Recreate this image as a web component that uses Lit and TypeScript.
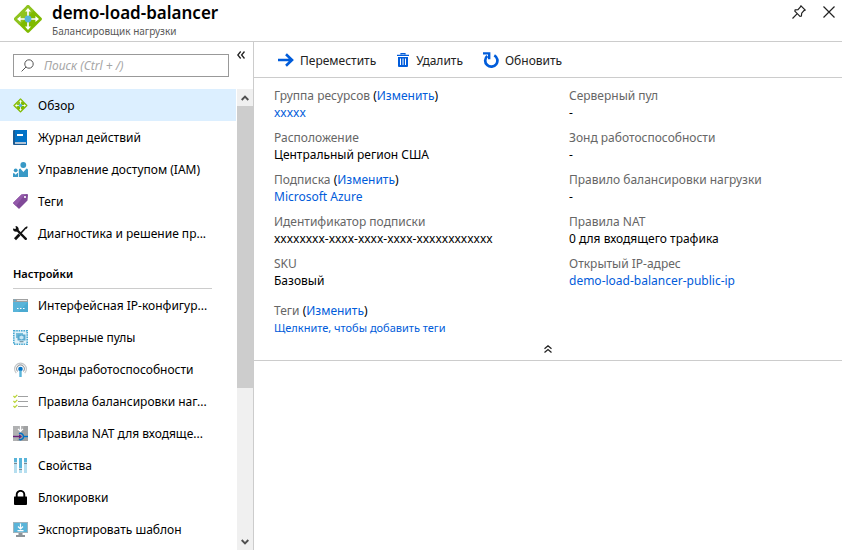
import { LitElement, html, svg, css, nothing, TemplateResult } from "lit";
import { customElement, property } from "lit/decorators.js";
import { classMap } from "lit/directives/class-map.js";

const balancer = svg`
  <path d="M14 1.400 Q15 .6 16 1.400 L28.600 14 Q29.400 15 28.600 16 L16 28.600 Q15 29.400 14 28.600 L1.400 16 Q.6 15 1.400 14Z" fill="#7fba00"/>
  <path d="M14 1.400 Q15 .6 16 1.400 L21 6.400 L6.400 21 L1.400 16 Q.6 15 1.400 14Z" fill="#8fc31f"/>
  <path d="M15 6V24M6 15H24" stroke="#fff" stroke-width="1.700"/>
  <path d="M15 4 L18 7.600H12ZM15 26 L12 22.400H18ZM4 15 L7.600 12V18ZM26 15 L22.400 18V12Z" fill="#fff"/>
  <circle cx="15" cy="15" r="3.400" fill="#59b4d9"/>`;

interface Icon { box: string; art: unknown }

const icons: Record<string, Icon> = {
  balancer: { box: "0 0 30 30", art: balancer },
  log: { box: "0 0 15 15", art: svg`
    <path d="M1 0H13V12H1Z" fill="#0072c6"/><path d="M2 12.500H13V13.500H2Z" fill="#dfe3e8"/>
    <path d="M0 1Q0 0 1 0H2V12.500H13V13.500H2V14H14V15H1Q0 15 0 14Z" fill="#1d5b92"/>
    <path d="M2 12.500H13V13.500H2Z" fill="#dfe3e8"/><path d="M13 0H14V15H13Z" fill="#0072c6"/>
    <path d="M4 4H10V6H4Z" fill="#fff"/>` },
  people: { box: "0 0 15 15", art: svg`
    <circle cx="10.300" cy="3" r="2.900" fill="#3999c6"/>
    <path d="M5.800 15V8Q5.800 6.500 7.300 6.500L10.400 10L13.500 6.500Q15 6.500 15 8V15Z" fill="#3999c6"/>
    <circle cx="2.700" cy="8.300" r="1.900" fill="#3999c6"/>
    <path d="M0 15V12Q0 11 1 11L2.700 12.800L4.400 11H5V15Z" fill="#3999c6"/>` },
  tag: { box: "0 0 15 15", art: svg`
    <path d="M8.500 .5L14 0Q15 0 15 1L14.500 6.500L6.500 14.500Q6 15 5.500 14.500L.4 9.500Q0 9 .4 8.500Z" fill="#804998"/>
    <path d="M8.500 .5L12 .2L3 12L.4 9.500Q0 9 .4 8.500Z" fill="#9359aa"/>
    <circle cx="12" cy="3" r="1.100" fill="#fff"/>` },
  tools: { box: "0 0 15 15", art: svg`
    <path d="M3.500 3.500L12.800 12.800" stroke="#111" stroke-width="2.400" stroke-linecap="round"/>
    <path d="M2.500 0L3 2.500L2.500 3L0 2.500Q0 6 3.500 5.800L5.800 3.500Q5.500 0 2.500 0Z" fill="#111"/>
    <path d="M12.800 1.800L8 7" stroke="#111" stroke-width="1.600"/>
    <path d="M14 .3L14.700 1L13.500 3L12 1.500Z" fill="#111"/>
    <path d="M6.500 8.500L2 13.300" stroke="#111" stroke-width="2.800"/>` },
  frontend: { box: "0 0 15 15", art: svg`
    <path d="M0 1H15V14H0Z" fill="#59b4d9"/><path d="M0 1H15V4H0Z" fill="#a0a1a2"/>
    <path d="M15 4V14H5Z" fill="#4baad1"/><circle cx="1.700" cy="2.500" r="1.100" fill="#59b4d9"/>
    <path d="M4 2H14V3H4Z" fill="#e4e4e4"/><path d="M4 10H5.500V11H4ZM7 10H8.500V11H7ZM10 10H11.500V11H10Z" fill="#fff"/>` },
  pools: { box: "0 0 15 15", art: svg`
    <rect x="1" y="1" width="13" height="13" fill="#e3f3fa"/>
    <rect x=".8" y=".8" width="13.400" height="13.400" fill="none" stroke="#48a8d1" stroke-width="1.600" stroke-dasharray="1.600 .8"/>
    <path d="M3 3H10V8H3Z" fill="#76bdda"/><path d="M4.500 4.500H12.500V10.500H4.500Z" fill="#59a9cf"/>
    <path d="M8.500 5.500L10.500 6.500V8.500L8.500 9.500L6.500 8.500V6.500Z" fill="#c7e6f4"/><path d="M6.500 11H10.500V12.300H6.500Z" fill="#7a9cab"/>` },
  probe: { box: "0 0 15 15", art: svg`
    <g fill="none"><path d="M3.300 11.200A5.900 5.900 0 1 1 11.700 11.200" stroke="#c2c5c7" stroke-width="1.200"/>
    <path d="M4.700 9.500A3.800 3.800 0 1 1 10.300 9.500" stroke="#9ca1a5" stroke-width="1.100"/></g>
    <circle cx="7.500" cy="7" r="2.300" fill="#0072c6"/><path d="M6.300 8.500H8.700V15H6.300Z" fill="#59b4d9"/>` },
  rules: { box: "0 0 15 15", art: svg`
    <path d="M5 2.500H15M5 7.500H15M5 12.500H15" stroke="#a0a1a2"/>
    <path d="M.4 2L1.800 3.300L4.300 .8M.4 7L1.800 8.300L4.300 5.800M.4 12L1.800 13.300L4.300 10.800" fill="none" stroke="#b8d432" stroke-width="1.200"/>` },
  nat: { box: "0 0 15 15", art: svg`
    <path d="M0 0H15V15H0Z" fill="#a0a1a2"/><path d="M0 0H11L4 15H0Z" fill="#b0b1b2"/>
    <path d="M7.500 0V5M5 2.800L7.500 5.300L10 2.800" fill="none" stroke="#fff" stroke-width="1.200"/>
    <path d="M0 10.500H8" stroke="#68217a" stroke-width="1.400"/><path d="M11 10.500H15" stroke="#0072c6" stroke-width="1.400"/>
    <path d="M6 7.600A3.200 3.200 0 1 1 6 13.400" fill="none" stroke="#0072c6" stroke-width="1.400"/>
    <path d="M6 8.300L9 10.500L6 12.700Z" fill="#68217a"/>` },
  props: { box: "0 0 15 15", art: svg`
    <path d="M1 0H4V15H1ZM6 0H9V15H6ZM11 0H14V15H11Z" fill="#b5deef"/>
    <path d="M1 0H4V4H1ZM6 0H9V10H6ZM11 0H14V4H11Z" fill="#59b4d9"/>
    <path d="M1 5H4V6H1ZM6 11H9V12H6ZM11 5H14V6H11Z" fill="#7b8a93"/>` },
  lock: { box: "0 0 15 15", art: svg`
    <path d="M3.700 7V4.500A3.800 3.600 0 0 1 11.300 4.500V7" fill="none" stroke="#000" stroke-width="1.900"/>
    <path d="M1.500 6.500H13.500Q14 6.500 14 7.500V14Q14 15 13 15H2Q1 15 1 14V7.500Q1 6.500 1.500 6.500Z"/>` },
  exporter: { box: "0 0 15 15", art: svg`
    <path d="M0 0H15V11H0Z" fill="#a0b4bd"/><path d="M1 1H14V10H1Z" fill="#59b4d9"/>
    <path d="M7.500 1.500V7M5 4.500L7.500 7L10 4.500M4.500 8.700H10.500" fill="none" stroke="#fff" stroke-width="1.200"/>
    <path d="M5.500 11H9.500V13H12V15H3V13H5.500Z" fill="#8d9499"/>` },
  search: { box: "0 0 13 13", art: svg`
    <circle cx="8" cy="5" r="4.200" fill="none" stroke="#555"/><path d="M5 8L.6 12.400" stroke="#555"/>` },
  move: { box: "0 0 16 14", art: svg`
    <path d="M0 7H14M8 1.300L14 7L8 12.700" fill="none" stroke="#015cda" stroke-width="2.600"/>` },
  trash: { box: "0 0 12 14", art: svg`
    <path d="M4 1.500V.7H8V1.500M0 2.300H12" fill="none" stroke="#015cda" stroke-width="1.200"/>
    <path d="M1 4H11V13Q11 14 10 14H2Q1 14 1 13Z" fill="#015cda"/>
    <path d="M3.500 5.500V12M6 5.500V12M8.500 5.500V12" stroke="#fff"/>` },
  refresh: { box: "0 0 16 17", art: svg`
    <path d="M11.300 3.300A6.100 6.100 0 1 1 4.300 4" fill="none" stroke="#015cda" stroke-width="2.700"/>
    <path d="M0 1.400H6.200V7.200" fill="none" stroke="#015cda" stroke-width="2.400"/>` },
  pin: { box: "0 0 14 14", art: svg`
    <path d="M9 .8L13.200 5L12 5.600L9.700 8.200L9.400 11L8 11.400L2.800 6.100L3.200 4.800L6 4.600L8.400 2Z M5 8.800L.5 13.500" fill="none" stroke="#222" stroke-width="1.200"/>` },
  close: { box: "0 0 12 12", art: svg`<path d="M.5 .5L11.500 11.500M11.500 .5L.5 11.500" stroke="#222" stroke-width="1.200"/>` },
  collapse: { box: "0 0 8 8", art: svg`<path d="M3.700 .5L.8 4L3.700 7.500M7.500 .5L4.600 4L7.500 7.500" fill="none" stroke="#222" stroke-width="1.300"/>` },
  fold: { box: "0 0 8 8", art: svg`<path d="M.5 3.700L4 .8L7.500 3.700M.5 7.500L4 4.600L7.500 7.500" fill="none" stroke="#222" stroke-width="1.300"/>` },
  up: { box: "0 0 8 6", art: svg`<path d="M.7 5L4 1.700L7.300 5" fill="none" stroke="#505050" stroke-width="1.900"/>` },
  down: { box: "0 0 8 6", art: svg`<path d="M.7 1L4 4.300L7.300 1" fill="none" stroke="#505050" stroke-width="1.900"/>` },
};

@customElement("ui-icon")
class UiIcon extends LitElement {
  @property() name = "";
  static styles = css`
    :host { display: block; flex: none; width: 15px; height: 15px; }
    svg { display: block; width: 100%; height: 100%; }
  `;
  render() {
    const icon = icons[this.name];
    return icon ? html`<svg viewBox=${icon.box} aria-hidden="true">${icon.art}</svg>` : nothing;
  }
}

interface NavItem { icon: string; label: string; active?: boolean }
interface Fact { label: string; value: string; editable?: boolean; link?: boolean; hint?: boolean }

const general: NavItem[] = [
  { icon: "balancer", label: "Обзор", active: true },
  { icon: "log", label: "Журнал действий" },
  { icon: "people", label: "Управление доступом (IAM)" },
  { icon: "tag", label: "Теги" },
  { icon: "tools", label: "Диагностика и решение пр..." },
];

const settings: NavItem[] = [
  { icon: "frontend", label: "Интерфейсная IP-конфигур..." },
  { icon: "pools", label: "Серверные пулы" },
  { icon: "probe", label: "Зонды работоспособности" },
  { icon: "rules", label: "Правила балансировки наг..." },
  { icon: "nat", label: "Правила NAT для входяще..." },
  { icon: "props", label: "Свойства" },
  { icon: "lock", label: "Блокировки" },
  { icon: "exporter", label: "Экспортировать шаблон" },
];

const leftFacts: Fact[] = [
  { label: "Группа ресурсов", value: "xxxxx", editable: true, link: true },
  { label: "Расположение", value: "Центральный регион США" },
  { label: "Подписка", value: "Microsoft Azure", editable: true, link: true },
  { label: "Идентификатор подписки", value: "xxxxxxxx-xxxx-xxxx-xxxx-xxxxxxxxxxxx" },
  { label: "SKU", value: "Базовый" },
  { label: "Теги", value: "Щелкните, чтобы добавить теги", editable: true, link: true, hint: true },
];

const rightFacts: Fact[] = [
  { label: "Серверный пул", value: "-" },
  { label: "Зонд работоспособности", value: "-" },
  { label: "Правило балансировки нагрузки", value: "-" },
  { label: "Правила NAT", value: "0 для входящего трафика" },
  { label: "Открытый IP-адрес", value: "demo-load-balancer-public-ip", link: true },
];

@customElement("app-root")
class AppRoot extends LitElement {
  static styles = css`
    :host {
      display: flex;
      flex-direction: column;
      height: 100vh;
      overflow: hidden;
      background: #fff;
      color: #000;
      font: 12px/17px "Noto Sans", "Open Sans", sans-serif;
    }
    * { box-sizing: border-box; }
    button {
      display: flex;
      align-items: center;
      padding: 0;
      border: 0;
      background: none;
      color: inherit;
      font: inherit;
      cursor: pointer;
    }
    a { color: #015cda; text-decoration: none; }
    ul, dl, dd, h1, h2, p { margin: 0; padding: 0; }
    ul { list-style: none; }

    .header {
      display: flex;
      flex: none;
      height: 42px;
      padding: 0 7px 0 13px;
      border-bottom: 1px solid #ccc;
    }
    .logo { width: 30px; height: 30px; margin-top: 4px; }
    .titles { flex: 1; padding: 1px 0 0 9px; }
    h1 { font-size: 17px; line-height: 23px; font-weight: 600; }
    .subtitle { color: #595959; font-size: 10px; line-height: 14px; }
    .window { display: flex; gap: 17px; height: 24px; }
    .pin { width: 14px; height: 14px; }
    .close { width: 12px; height: 12px; }

    .body { display: flex; flex: 1; min-height: 0; }
    .side {
      display: flex;
      flex-direction: column;
      flex: none;
      width: 254px;
      border-right: 1px solid #ccc;
    }
    .find { display: flex; flex: none; gap: 8px; height: 47px; padding: 9px 8px 0 13px; }
    .search {
      display: flex;
      flex: 1;
      align-items: center;
      gap: 10px;
      min-width: 0;
      height: 23px;
      margin-top: 3px;
      padding: 0 7px;
      border: 1px solid #999;
    }
    .search ui-icon { width: 13px; height: 13px; }
    input {
      flex: 1;
      min-width: 0;
      padding: 0;
      border: 0;
      outline: 0;
      background: none;
      font: italic 12px/17px "Noto Sans", "Open Sans", sans-serif;
    }
    input::placeholder { color: #a6a6a6; opacity: 1; }
    .find button { align-self: flex-start; }
    .small { width: 8px; height: 8px; }

    .menu { display: flex; flex: 1; gap: 1px; min-height: 0; }
    nav { flex: 1; min-width: 0; overflow: hidden; }
    .item {
      display: flex;
      align-items: center;
      gap: 10px;
      height: 32px;
      padding-left: 13px;
      color: #000;
      white-space: nowrap;
    }
    .active { background: #dcefff; }
    h2 {
      height: 40px;
      margin: 0 24px 0 13px;
      padding-top: 16px;
      border-bottom: 1px solid #ccc;
      font-size: 11px;
      line-height: 17px;
      font-weight: 600;
    }
    .scroll {
      display: flex;
      flex-direction: column;
      flex: none;
      width: 16px;
      background: #f0f0f0;
    }
    .scroll button { flex: none; justify-content: center; height: 17px; }
    .scroll ui-icon { width: 8px; height: 6px; }
    .track { flex: 1; }
    .thumb { height: 66%; background: #cdcdcd; }

    main { flex: 1; min-width: 0; }
    .toolbar {
      display: flex;
      gap: 20px;
      height: 36px;
      padding: 1px 0 0 24px;
      border-bottom: 1px solid #ccc;
      color: #222;
    }
    .toolbar button { gap: 6px; }
    .move { width: 16px; height: 14px; }
    .trash { width: 14px; height: 14px; }
    .refresh { width: 16px; height: 17px; }
    .facts {
      display: grid;
      grid-template-columns: 1fr 1fr;
      column-gap: 42px;
      padding: 9px 20px 0;
    }
    .fact + .fact { margin-top: 8px; }
    .fact + .hint { margin-top: 13px; }
    .hint dd { font-size: 11px; }
    .name { color: #666; }
    .fold {
      display: flex;
      justify-content: center;
      height: 25px;
      padding-top: 5px;
      border-bottom: 1px solid #ccc;
    }
    .fold button { height: 16px; }
  `;

  private menu(items: NavItem[]): TemplateResult {
    return html`<ul>${items.map((i) => html`<li>
      <a href="#" class=${classMap({ item: true, active: !!i.active })}><ui-icon name=${i.icon}></ui-icon>${i.label}</a>
    </li>`)}</ul>`;
  }

  private facts(items: Fact[]): TemplateResult {
    return html`<dl>${items.map((f) => html`<div class=${classMap({ fact: true, hint: !!f.hint })}>
      <dt><span class="name">${f.label}</span>${f.editable ? html` (<a href="#">Изменить</a>)` : nothing}</dt>
      <dd>${f.link ? html`<a href="#">${f.value}</a>` : f.value}</dd>
    </div>`)}</dl>`;
  }

  render() {
    return html`
      <header class="header">
        <ui-icon class="logo" name="balancer"></ui-icon>
        <div class="titles">
          <h1>demo-load-balancer</h1>
          <p class="subtitle">Балансировщик нагрузки</p>
        </div>
        <div class="window">
          <button aria-label="Закрепить"><ui-icon class="pin" name="pin"></ui-icon></button>
          <button aria-label="Закрыть"><ui-icon class="close" name="close"></ui-icon></button>
        </div>
      </header>
      <div class="body">
        <aside class="side">
          <div class="find">
            <label class="search">
              <ui-icon name="search"></ui-icon>
              <input type="text" aria-label="Поиск" placeholder="Поиск (Ctrl + /)" />
            </label>
            <button aria-label="Свернуть меню"><ui-icon class="small" name="collapse"></ui-icon></button>
          </div>
          <div class="menu">
            <nav>
              ${this.menu(general)}
              <h2>Настройки</h2>
              ${this.menu(settings)}
            </nav>
            <div class="scroll">
              <button aria-label="Вверх"><ui-icon name="up"></ui-icon></button>
              <div class="track"><div class="thumb"></div></div>
              <button aria-label="Вниз"><ui-icon name="down"></ui-icon></button>
            </div>
          </div>
        </aside>
        <main>
          <div class="toolbar">
            <button><ui-icon class="move" name="move"></ui-icon>Переместить</button>
            <button><ui-icon class="trash" name="trash"></ui-icon>Удалить</button>
            <button><ui-icon class="refresh" name="refresh"></ui-icon>Обновить</button>
          </div>
          <section class="facts">${this.facts(leftFacts)}${this.facts(rightFacts)}</section>
          <div class="fold"><button aria-label="Свернуть сведения"><ui-icon class="small" name="fold"></ui-icon></button></div>
        </main>
      </div>
    `;
  }
}
